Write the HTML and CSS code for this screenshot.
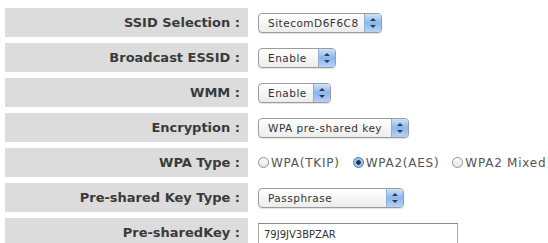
FILE: index.html
```html
<!DOCTYPE html>
<html>
<head>
<meta charset="utf-8">
<link rel="stylesheet" href="styles.css">
</head>
<body>
<div class="form">
  <div class="label">SSID Selection :</div>
  <div class="field"><div class="sel w-ssid"><span class="val">SitecomD6F6C8</span><span class="step"></span></div></div>

  <div class="label">Broadcast ESSID :</div>
  <div class="field"><div class="sel w-bc"><span class="val">Enable</span><span class="step"></span></div></div>

  <div class="label">WMM :</div>
  <div class="field"><div class="sel w-wmm"><span class="val">Enable</span><span class="step"></span></div></div>

  <div class="label">Encryption :</div>
  <div class="field"><div class="sel w-enc"><span class="val">WPA pre-shared key</span><span class="step"></span></div></div>

  <div class="label">WPA Type :</div>
  <div class="field radios">
    <span class="radio"><span class="dot"></span>WPA(TKIP)</span>
    <span class="radio"><span class="dot on"></span>WPA2(AES)</span>
    <span class="radio"><span class="dot"></span>WPA2 Mixed</span>
  </div>

  <div class="label">Pre-shared Key Type :</div>
  <div class="field"><div class="sel w-pkt"><span class="val">Passphrase</span><span class="step"></span></div></div>

  <div class="label">Pre-sharedKey :</div>
  <div class="field"><div class="input">79J9JV3BPZAR</div></div>
</div>
</body>
</html>
```

FILE: styles.css
```css
html, body { margin: 0; padding: 0; background: #fff; }
body { padding: 8px 0 0 5px; font-family: "DejaVu Sans", Verdana, sans-serif; }

.form {
  display: grid;
  grid-template-columns: 243px 1fr;
  grid-auto-rows: 29px;
  row-gap: 6px;
  column-gap: 10px;
}

.label {
  background: #dcdcdc;
  color: #3a3a3a;
  font-weight: bold;
  font-size: 13px;
  display: flex;
  align-items: center;
  justify-content: flex-end;
  padding-right: 8px;
}

.field { display: flex; align-items: center; }

.sel {
  height: 20px;
  box-sizing: border-box;
  border: 1px solid #9c9c9c;
  border-radius: 4px;
  background: linear-gradient(#ffffff, #ececec);
  display: flex;
  align-items: stretch;
  font-size: 10.5px;
  letter-spacing: 0.5px;
  color: #333;
  box-shadow: 0 1px 1px rgba(0,0,0,0.12);
}
.sel .val { flex: 1; display: flex; align-items: center; padding-left: 9px; white-space: nowrap; overflow: hidden; }
.sel .step {
  width: 16px;
  border-radius: 0 3px 3px 0;
  background: linear-gradient(#cfe2f8, #8ab6ea 50%, #b6d3f5);
  border-left: 1px solid #8eaed6;
  position: relative;
}
.sel .step::before, .sel .step::after {
  content: "";
  position: absolute;
  left: 5px;
  border-left: 3px solid transparent;
  border-right: 3px solid transparent;
}
.sel .step::before { top: 4px; border-bottom: 3px solid #2a3a55; }
.sel .step::after { bottom: 4px; border-top: 3px solid #2a3a55; }

.w-ssid { width: 124px; }
.w-bc { width: 78px; }
.w-wmm { width: 73px; }
.w-enc { width: 151px; }
.w-pkt { width: 146px; }

.radios { font-size: 12px; color: #555; gap: 13px; }
.radio { display: flex; align-items: center; white-space: nowrap; letter-spacing: 0.75px; }
.dot {
  width: 11px; height: 11px; box-sizing: border-box;
  border: 1px solid #8f8f8f; border-radius: 50%;
  background: linear-gradient(#fff, #e6e6e6);
  margin-right: 2px;
}
.dot.on { border-color: #4a78b8; background: radial-gradient(circle, #1e2e50 0 2px, #9cc2ee 2.5px); }

.input {
  width: 200px; height: 22px; box-sizing: border-box;
  border: 1px solid #a8a8a8;
  border-top-color: #8a8a8a;
  font-size: 10px; color: #333;
  display: flex; align-items: center; padding-left: 5px;
  margin-top: 3px;
}
```
